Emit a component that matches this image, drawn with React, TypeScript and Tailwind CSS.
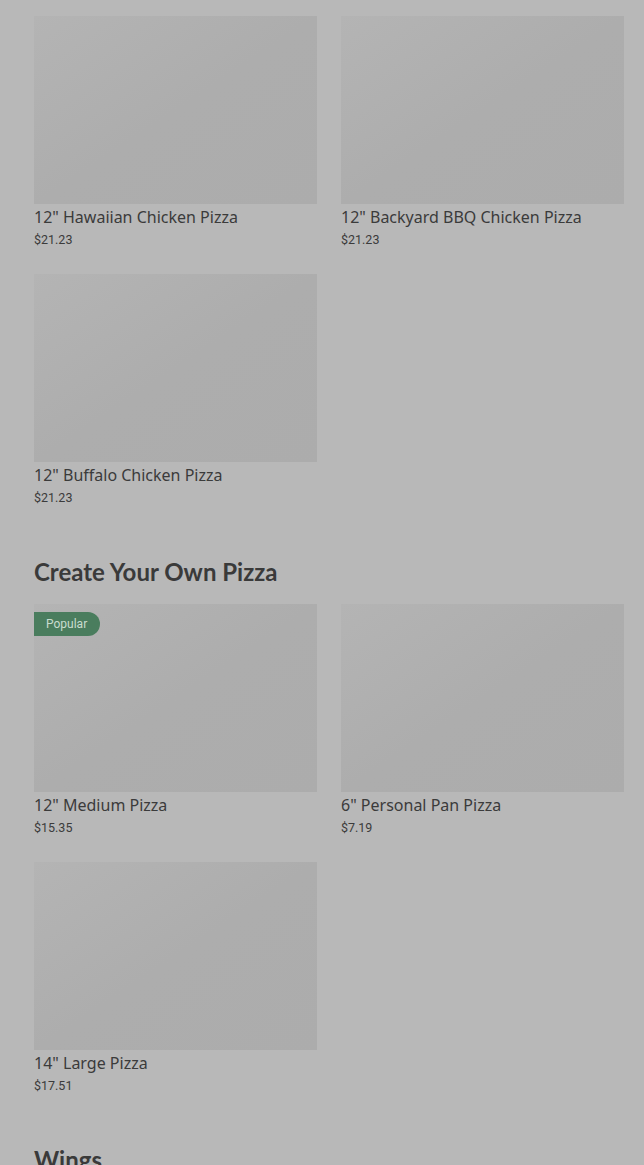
type Item = { name: string; price: string; popular?: boolean };

const sections: { title?: string; items: Item[] }[] = [
  {
    items: [
      { name: '12" Hawaiian Chicken Pizza', price: '$21.23' },
      { name: '12" Backyard BBQ Chicken Pizza', price: '$21.23' },
      { name: '12" Buffalo Chicken Pizza', price: '$21.23' },
    ],
  },
  {
    title: 'Create Your Own Pizza',
    items: [
      { name: '12" Medium Pizza', price: '$15.35', popular: true },
      { name: '6" Personal Pan Pizza', price: '$7.19' },
      { name: '14" Large Pizza', price: '$17.51' },
    ],
  },
  { title: 'Wings', items: [] },
];

function ProductCard({ item }: { item: Item }) {
  return (
    <div className="flex flex-col">
      <div className="relative h-[188px] bg-gradient-to-br from-[#b4b4b4] via-[#adadad] to-[#acacac]">
        {item.popular && (
          <span className="absolute left-0 top-[8px] flex h-[24px] items-center rounded-r-full bg-[#4a7d5e] pl-[12px] pr-[13px] text-[12px] text-[#c9dccf]">
            Popular
          </span>
        )}
      </div>
      <div className="mt-[1px] text-[16px] leading-6 text-[#3b3b3b] font-['Noto_Sans',sans-serif]">
        {item.name}
      </div>
      <div className="mt-[1px] text-[12.5px] leading-5 text-[#3b3b3b] font-['Roboto',sans-serif]">{item.price}</div>
    </div>
  );
}

export default function App() {
  return (
    <div className="min-h-[1165px] bg-[#b8b8b8] pl-[34px] pr-[20px] pt-[16px] font-['Roboto',sans-serif]">
      {sections.map((section, i) => (
        <div key={i}>
          {section.title && (
            <h2 className="mt-[49px] mb-[17px] text-[24px] leading-[30px] font-bold text-[#3a3a3a] font-['Lato',sans-serif]">
              {section.title}
            </h2>
          )}
          <div className="grid grid-cols-2 gap-x-[24px] gap-y-[24px]">
            {section.items.map((item) => (
              <ProductCard key={item.name} item={item} />
            ))}
          </div>
        </div>
      ))}
    </div>
  );
}
